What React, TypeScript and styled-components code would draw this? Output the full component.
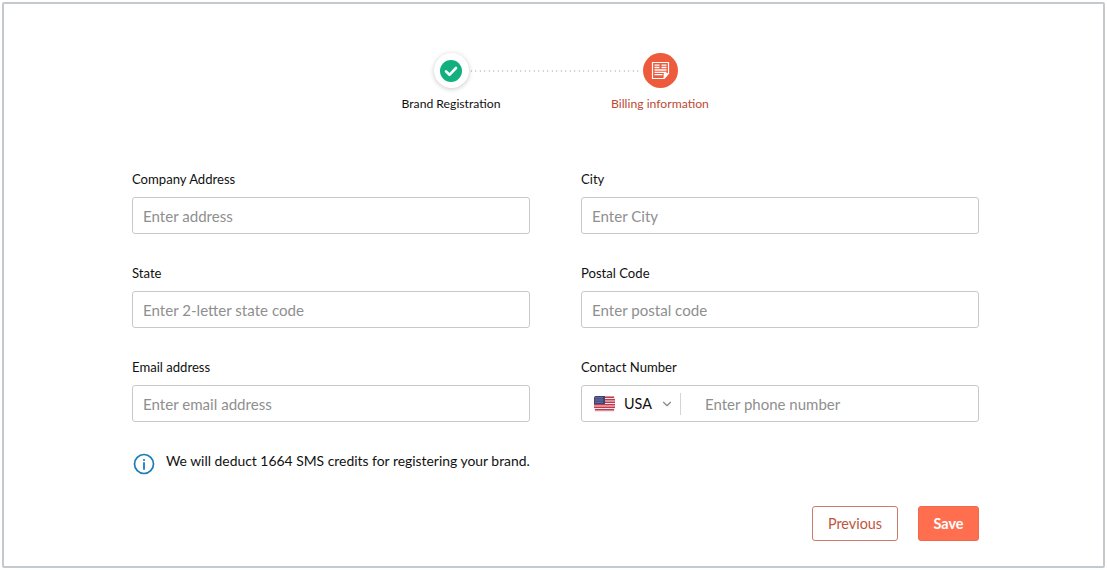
import React from 'react';
import styled, { createGlobalStyle } from 'styled-components';
import { FiChevronDown } from 'react-icons/fi';

const GlobalStyle = createGlobalStyle`
  html, body {
    margin: 0;
    padding: 0;
    background: #fff;
    font-family: Lato, "Open Sans", sans-serif;
  }
  * {
    box-sizing: border-box;
  }
`;

const Frame = styled.div`
  width: 1103px;
  height: 566px;
  margin: 2px 0 0 2px;
  padding: 49px 125px 0 128px;
  border: 2px solid #c3c9cc;
  border-radius: 2px;
  background: #fff;
`;

const Stepper = styled.div`
  display: flex;
  margin-left: 269px;
`;

const Step = styled.div`
  width: 100px;
  display: flex;
  flex-direction: column;
  align-items: center;
  position: relative;
  z-index: 1;
`;

const StepCircle = styled.div<{ $active?: boolean }>`
  width: 35px;
  height: 35px;
  border-radius: 50%;
  display: flex;
  align-items: center;
  justify-content: center;
  background: ${(props) => (props.$active ? '#ee5b3c' : '#fff')};
  box-shadow: ${(props) => (props.$active ? 'none' : '0 1px 5px rgba(0, 0, 0, 0.22)')};
`;

const StepLabel = styled.div<{ $active?: boolean }>`
  margin-top: 8px;
  font-size: 12.2px;
  line-height: 16px;
  white-space: nowrap;
  color: ${(props) => (props.$active ? '#bd4a33' : '#111')};
`;

const Connector = styled.div`
  flex: none;
  width: 173px;
  height: 2px;
  margin: 17px -32px 0;
  background-image: radial-gradient(circle, #bfc4c7 0.8px, transparent 1px);
  background-size: 4.5px 2px;
`;

const FormGrid = styled.div`
  display: grid;
  grid-template-columns: 398px 398px;
  column-gap: 51px;
  row-gap: 30px;
  margin-top: 58px;
`;

const Field = styled.div`
  display: flex;
  flex-direction: column;
`;

const Label = styled.label`
  height: 18px;
  margin-bottom: 9px;
  font-size: 13.1px;
  line-height: 18px;
  color: #111;
`;

const Input = styled.input`
  width: 100%;
  height: 37px;
  padding: 0 10px;
  border: 1px solid #c9c9c9;
  border-radius: 3px;
  outline: none;
  background: #fff;
  font-family: inherit;
  font-size: 15.1px;
  color: #222;

  &::placeholder {
    color: #8f8f8f;
    opacity: 1;
  }
`;

const PhoneBox = styled.div`
  display: flex;
  align-items: center;
  height: 37px;
  border: 1px solid #c9c9c9;
  border-radius: 3px;
`;

const CountrySelect = styled.div`
  display: flex;
  align-items: center;
  height: 22px;
  padding-left: 12px;
  width: 99px;
  border-right: 1px solid #d4d4d4;
  font-size: 14.4px;
  color: #111;

  svg:last-child {
    margin-left: 8px;
    color: #888;
  }
`;

const CountryName = styled.span`
  margin-left: 9px;
`;

const PhoneInput = styled.input`
  flex: 1;
  min-width: 0;
  height: 100%;
  padding: 0 0 0 24px;
  border: none;
  outline: none;
  background: transparent;
  font-family: inherit;
  font-size: 15px;

  &::placeholder {
    color: #8f8f8f;
    opacity: 1;
  }
`;

const Notice = styled.div`
  display: flex;
  align-items: flex-start;
  gap: 11px;
  margin: 30px 0 0 1px;
  font-size: 13.9px;
  line-height: 18px;
  color: #111;

  svg {
    flex: none;
    margin-top: 1px;
  }
`;

const Actions = styled.div`
  display: flex;
  justify-content: flex-end;
  gap: 20px;
  width: 847px;
  margin-top: 31px;
`;

const Button = styled.button<{ $primary?: boolean }>`
  height: 35px;
  width: ${(props) => (props.$primary ? '61px' : '86px')};
  padding: 0;
  border-radius: 3px;
  border: 1px solid ${(props) => (props.$primary ? '#f0694a' : '#cf7a68')};
  background: ${(props) => (props.$primary ? '#ff6f4f' : '#fff')};
  color: ${(props) => (props.$primary ? '#fff' : '#c1553d')};
  font-family: inherit;
  font-size: 14.4px;
  font-weight: ${(props) => (props.$primary ? 700 : 400)};
`;

const CheckIcon = () => (
  <svg width="22" height="22" viewBox="0 0 22 22">
    <circle cx="11" cy="11" r="11" fill="#12b07f" />
    <path d="M6 11.4l3.5 3.4L16 8" fill="none" stroke="#fff" strokeWidth="2.6" strokeLinecap="round" strokeLinejoin="round" />
  </svg>
);

const BillIcon = () => (
  <svg width="19" height="19" viewBox="0 0 19 19" fill="none" stroke="#fff">
    <path d="M1.5 1.5h16v11l-4.5 5h-11.500z" strokeWidth="1.2" />
    <path d="M3.500 4.200h5M10.500 4.200h5M3.500 6.500h5M10.500 6.500h5M3.500 9h12M3.500 11.300h12M3.500 13.600h8" strokeWidth="1.300" />
    <path d="M13 17.500v-5h4.500z" fill="#fff" strokeWidth="0.8" />
  </svg>
);

const FlagIcon = () => (
  <svg width="21" height="16" viewBox="0 0 21 16">
    <rect width="21" height="16" rx="2" fill="#f3e6e6" />
    <path d="M1 1.300h19M0 3.800h21M0 6.300h21M0 8.800h21M0 11.300h21M1 13.800h19" stroke="#c23a4c" strokeWidth="1.400" />
    <path d="M0 2a2 2 0 0 1 2-2h9v8H0z" fill="#3d4279" />
    <path d="M1.500 1.800h8M1.500 4h8M1.500 6.200h8" stroke="#c9cbe2" strokeWidth="0.800" strokeDasharray="1 1" />
  </svg>
);

const InfoIcon = () => (
  <svg width="22" height="22" viewBox="0 0 22 22" fill="none">
    <circle cx="11" cy="11" r="9.500" stroke="#1d7ab8" strokeWidth="1.700" />
    <circle cx="11" cy="7" r="1.100" fill="#1d7ab8" />
    <path d="M11 10v6" stroke="#1d7ab8" strokeWidth="1.800" strokeLinecap="round" />
  </svg>
);

const fields = [
  { label: 'Company Address', placeholder: 'Enter address' },
  { label: 'City', placeholder: 'Enter City' },
  { label: 'State', placeholder: 'Enter 2-letter state code' },
  { label: 'Postal Code', placeholder: 'Enter postal code' },
  { label: 'Email address', placeholder: 'Enter email address' },
];

export default function App() {
  return (
    <>
      <GlobalStyle />
      <Frame>
        <Stepper>
          <Step>
            <StepCircle>
              <CheckIcon />
            </StepCircle>
            <StepLabel>Brand Registration</StepLabel>
          </Step>
          <Connector />
          <Step>
            <StepCircle $active>
              <BillIcon />
            </StepCircle>
            <StepLabel $active>Billing information</StepLabel>
          </Step>
        </Stepper>

        <FormGrid>
          {fields.map((field) => (
            <Field key={field.label}>
              <Label>{field.label}</Label>
              <Input placeholder={field.placeholder} />
            </Field>
          ))}
          <Field>
            <Label>Contact Number</Label>
            <PhoneBox>
              <CountrySelect>
                <FlagIcon />
                <CountryName>USA</CountryName>
                <FiChevronDown size={14} />
              </CountrySelect>
              <PhoneInput placeholder="Enter phone number" />
            </PhoneBox>
          </Field>
        </FormGrid>

        <Notice>
          <InfoIcon />
          We will deduct 1664 SMS credits for registering your brand.
        </Notice>

        <Actions>
          <Button>Previous</Button>
          <Button $primary>Save</Button>
        </Actions>
      </Frame>
    </>
  );
}
